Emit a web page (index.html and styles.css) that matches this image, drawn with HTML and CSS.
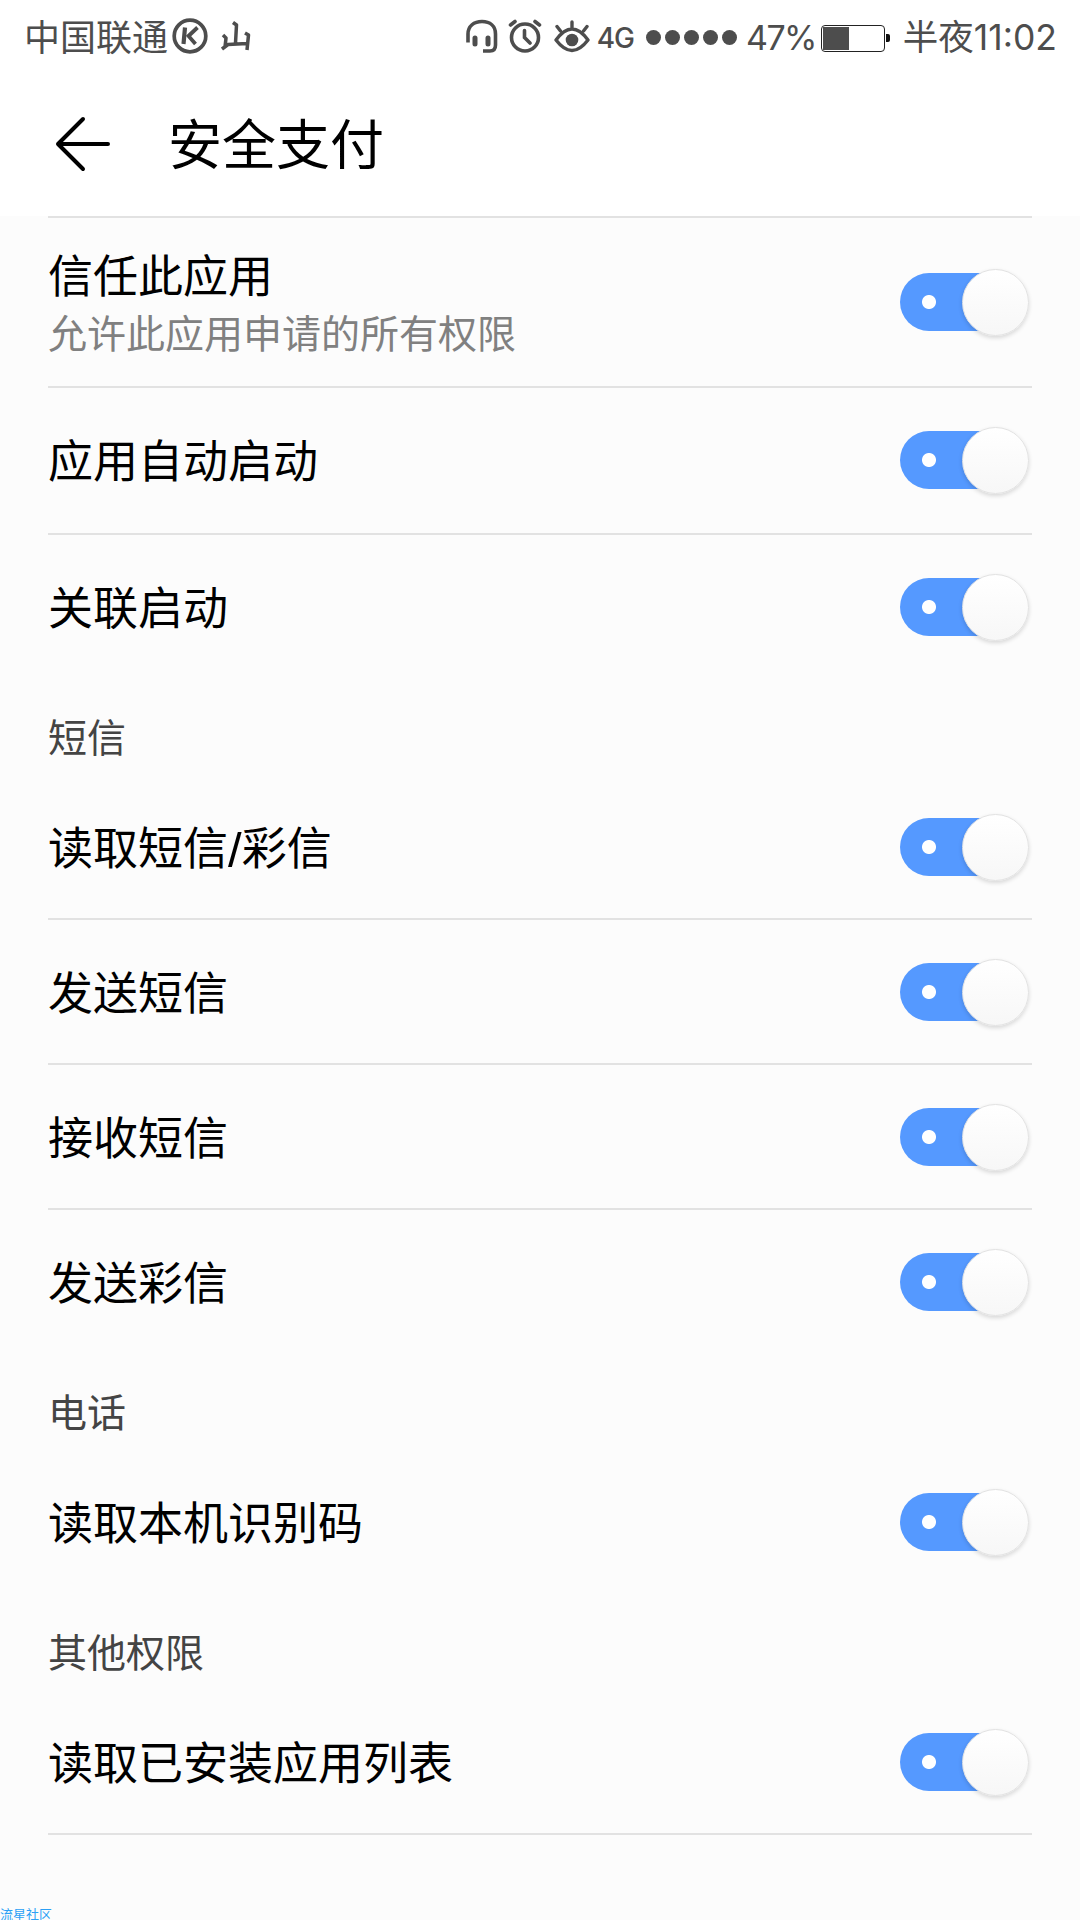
FILE: index.html
```html
<!DOCTYPE html>
<html lang="zh-CN">
<head>
  <meta charset="UTF-8">
  <meta name="viewport" content="width=device-width, initial-scale=1.0">
  <title>安全支付</title>
  <link rel="stylesheet" href="styles.css">
</head>
<body>
  <!-- Status bar -->
  <div class="status-bar">
    <div class="status-left">
      <span class="carrier">中国联通</span>
      <svg class="icon-k" width="36" height="36" viewBox="0 0 36 36" fill="none" stroke="#4d4d4d">
        <circle cx="18" cy="18" r="15.800" stroke-width="3.700"/>
        <path d="M13 9.500L11.500 26" stroke-width="4.200"/>
        <path d="M25.500 9.500L16.500 18L23.500 26" stroke-width="3.800"/>
      </svg>
      <svg class="icon-mountain" width="30" height="30" viewBox="0 0 30 30" fill="none" stroke="#4d4d4d" stroke-width="3.500" stroke-linejoin="round">
        <path d="M12 1.500L15.500 4L14.500 22M2 14L5 17L4 26M1 28L7 23.500L26 22.500M24 12L27.500 14L26 29"/>
      </svg>
    </div>
    <div class="status-right">
      <svg class="icon-headset" width="32" height="34" viewBox="0 0 32 34" fill="none" stroke="#4d4d4d" stroke-width="3.600" stroke-linecap="round">
        <path d="M2 23.500V15C2 7 8 2.500 16 2.500S29.500 7 29.500 15V26Q29.500 32 24 32H17" stroke-linecap="butt"/>
        <path d="M9 19V25M22 19V25" stroke-width="5"/>
      </svg>
      <svg class="icon-alarm" width="34" height="34" viewBox="0 0 34 34" fill="none" stroke="#4d4d4d" stroke-width="3.600" stroke-linecap="round">
        <circle cx="17" cy="18.500" r="13.500"/>
        <path d="M2.500 6L7 2.500M31.500 6L27 2.500M16.500 11.500V18.500L22 24"/>
      </svg>
      <svg class="icon-eye" width="36" height="34" viewBox="0 0 36 34" fill="none" stroke="#4d4d4d" stroke-width="3.400" stroke-linecap="round" stroke-linejoin="round">
        <path d="M2 21Q18 -1 34 21Q18 42 2 21ZM18 9V3M6.500 12L3 7.500M29.500 12L33 7.500"/>
        <circle cx="18" cy="21" r="6.300" fill="#4d4d4d" stroke="none"/>
      </svg>
      <span class="network">4G</span>
      <div class="signal">
        <i></i><i></i><i></i><i></i><i></i>
      </div>
      <span class="percent">47%</span>
      <div class="battery"><div class="battery-level"></div></div>
      <span class="clock">半夜11:02</span>
    </div>
  </div>

  <!-- Title bar -->
  <div class="header">
    <svg class="back" width="56" height="56" viewBox="0 0 56 56" fill="none" stroke="#000" stroke-width="4" stroke-linecap="round" stroke-linejoin="round">
      <path d="M28 3L3 28L28 53M3 28H53"/>
    </svg>
    <h1>安全支付</h1>
  </div>

  <!-- Permissions -->
  <div class="settings">
    <div class="row row-tall">
      <div class="label">信任此应用<small>允许此应用申请的所有权限</small></div>
      <div class="toggle"></div>
    </div>
    <div class="row row-auto">
      <div class="label">应用自动启动</div>
      <div class="toggle"></div>
    </div>
    <div class="row row-last">
      <div class="label">关联启动</div>
      <div class="toggle"></div>
    </div>

    <div class="section-title">短信</div>
    <div class="row">
      <div class="label">读取短信<span class="slash">/</span>彩信</div>
      <div class="toggle"></div>
    </div>
    <div class="row">
      <div class="label">发送短信</div>
      <div class="toggle"></div>
    </div>
    <div class="row">
      <div class="label">接收短信</div>
      <div class="toggle"></div>
    </div>
    <div class="row row-last">
      <div class="label">发送彩信</div>
      <div class="toggle"></div>
    </div>

    <div class="section-title">电话</div>
    <div class="row row-last">
      <div class="label">读取本机识别码</div>
      <div class="toggle"></div>
    </div>

    <div class="section-title">其他权限</div>
    <div class="row">
      <div class="label">读取已安装应用列表</div>
      <div class="toggle"></div>
    </div>
  </div>

  <div class="watermark">流星社区</div>
</body>
</html>
```
FILE: styles.css
```css
*,
*::after {
  box-sizing: border-box;
}

body {
  font-family: "Noto Sans CJK SC", sans-serif;
  margin: 0;
  height: 1920px;
  background: #fcfcfc;
  color: #000;
  display: flex;
  flex-direction: column;
  overflow: hidden;
}

.status-bar {
  height: 72px;
  padding: 0 24px;
  background: #fff;
  color: #4d4d4d;
  display: flex;
  justify-content: space-between;
  font-size: 36px;
  line-height: 70px;
  white-space: nowrap;
}

.status-left,
.status-right {
  display: flex;
  align-items: center;
}

.carrier {
  height: 72px;
}

.icon-k {
  margin-left: 4px;
}

.icon-mountain {
  margin-left: 13px;
}

.icon-alarm {
  margin-left: 10px;
}

.icon-eye {
  margin-left: 12px;
}

.network {
  font-family: Inter, sans-serif;
  font-size: 28px;
  font-weight: 500;
  letter-spacing: -1px;
  margin: 4px 0 0 7px;
}

.signal {
  display: flex;
  gap: 4px;
  margin: 2px 0 0 12px;
}

.signal i {
  width: 15px;
  height: 15px;
  border-radius: 50%;
  background: #4d4d4d;
}

.percent {
  font-family: Inter, sans-serif;
  font-size: 34px;
  letter-spacing: -1.6px;
  margin: 4px 0 0 9px;
}

.battery {
  position: relative;
  width: 64px;
  height: 27px;
  margin: 4px 18px 0 5px;
  padding: 1px;
  border: 1px solid #222;
  border-radius: 4px;
}

.battery::after {
  content: '';
  position: absolute;
  right: -6px;
  top: 8px;
  width: 4px;
  height: 8px;
  border-radius: 0 2px 2px 0;
  background: #111;
}

.battery-level {
  width: 26px;
  height: 23px;
  background: #4d4d4d;
}

.clock {
  font-family: Inter, "Noto Sans CJK SC", sans-serif;
  font-size: 35.500px;
  margin: 4px -1px 0 0;
}

.header {
  height: 144px;
  padding-left: 55px;
  background: #fff;
  display: flex;
  align-items: center;
}

.header h1 {
  margin: 0 0 5px 57px;
  font-size: 54px;
  line-height: 80px;
  font-weight: normal;
}

.settings {
  margin: 0 48px;
  border-top: 2px solid #e2e2e2;
}

.row {
  height: 145px;
  border-bottom: 2px solid #e2e2e2;
  display: flex;
  align-items: center;
  justify-content: space-between;
}

.row-tall {
  height: 170px;
}

.row-auto {
  height: 147px;
  padding-bottom: 1px;
}

.row-last {
  height: 144px;
  border-bottom: none;
}

.label {
  padding-bottom: 2px;
  font-size: 45px;
  line-height: 60px;
}

.row-tall .label {
  padding-bottom: 0;
}

.label small {
  display: block;
  margin: -1px 0 1px;
  font-size: 39px;
  line-height: 56px;
  color: #808080;
}

.slash {
  font-family: "Liberation Sans", sans-serif;
  font-size: 49px;
  line-height: 1;
  vertical-align: -2px;
}

.section-title {
  height: 96px;
  padding-top: 26px;
  font-size: 39px;
  line-height: 60px;
  color: #444;
}

/* Blue track with a white dot, knob on the right */
.toggle {
  position: relative;
  width: 96px;
  height: 58px;
  margin-right: 36px;
  border-radius: 29px 0 0 29px;
  background: radial-gradient(circle at 29px 29px, #fff 6.5px, #5599ff 7.5px);
}

.toggle::after {
  content: '';
  position: absolute;
  left: 62px;
  top: -4px;
  width: 67px;
  height: 67px;
  border: 1px solid #e2e2e2;
  border-radius: 50%;
  background: linear-gradient(#fff, #f7f7f7);
  box-shadow: 0 2px 4px rgba(0, 0, 0, 0.15);
}

.watermark {
  position: absolute;
  left: 0;
  bottom: -3px;
  font-size: 13px;
  line-height: 18px;
  color: #2ba0f5;
}
```
